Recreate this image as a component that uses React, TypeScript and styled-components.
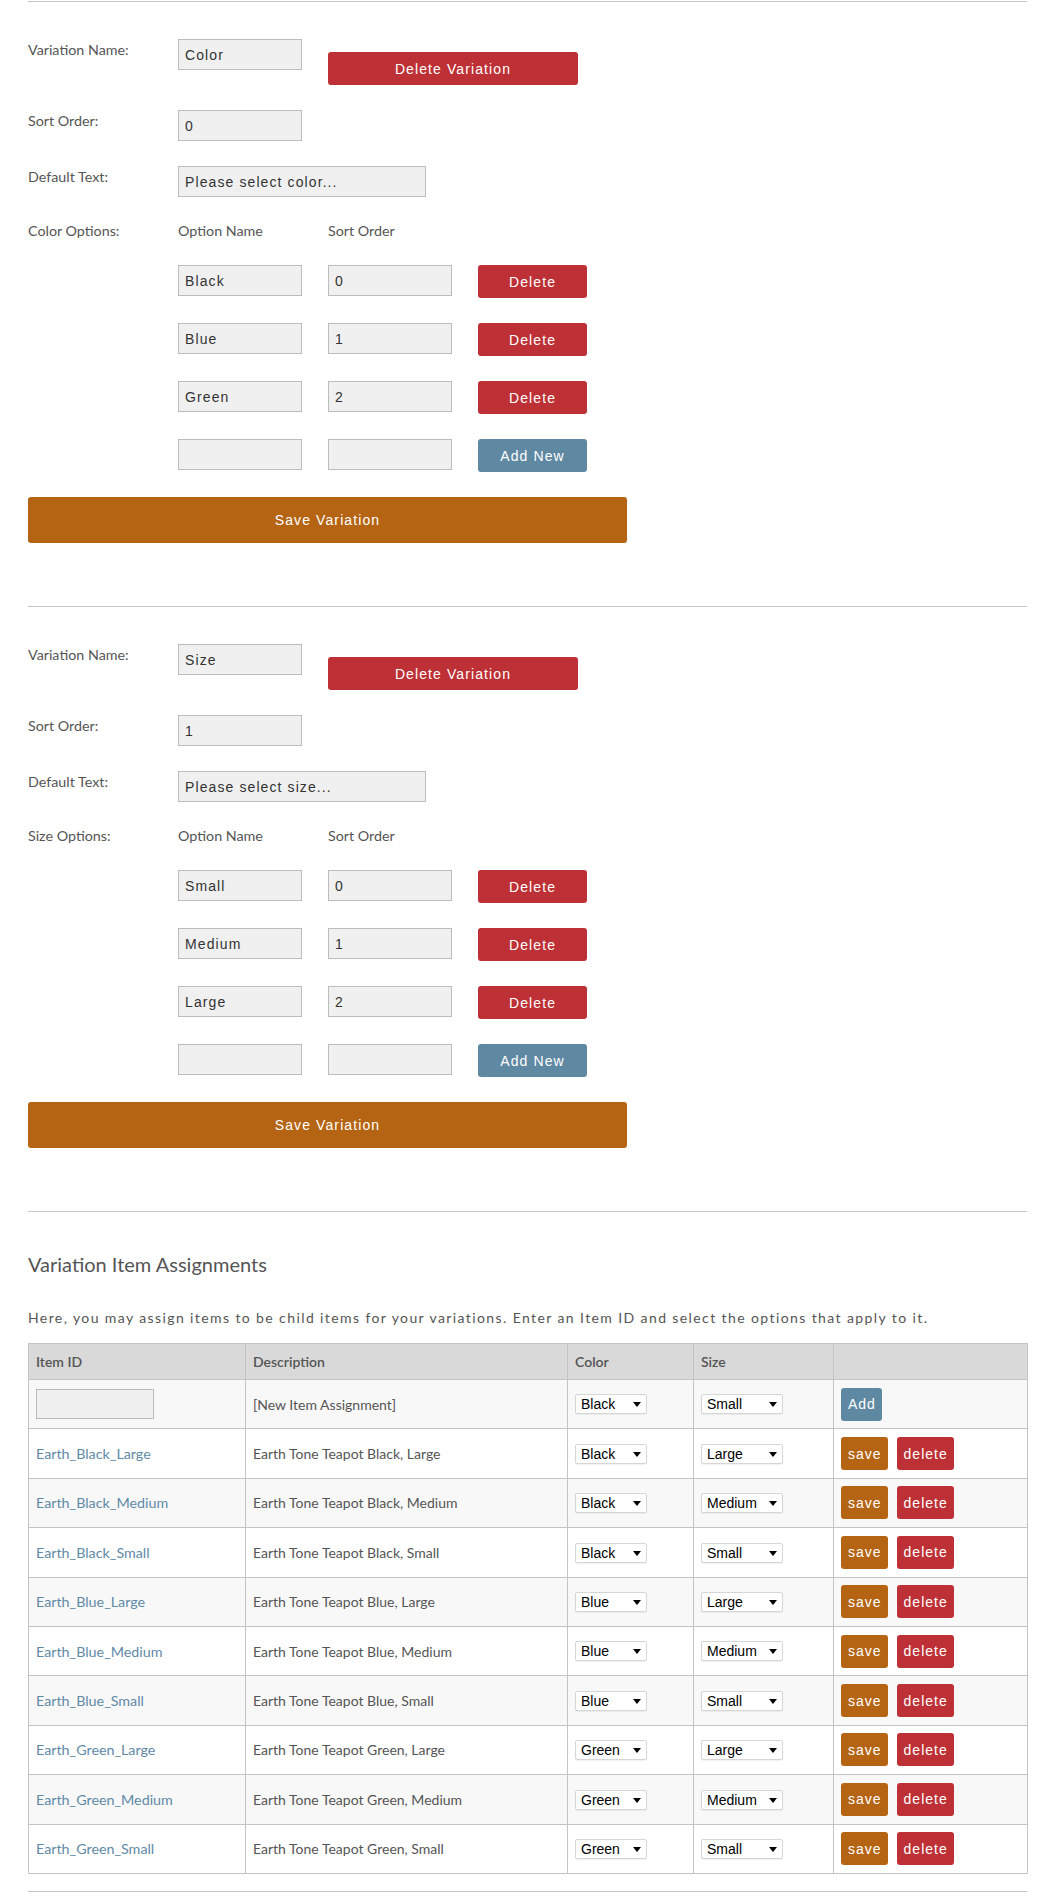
import React from 'react';
import styled, { createGlobalStyle } from 'styled-components';

const GlobalStyle = createGlobalStyle`
  body {
    margin: 0;
    background: #fff;
    color: #555;
    font-family: Lato, "Open Sans", sans-serif;
  }
`;

const colors = {
  red: '#bd3035',
  orange: '#b56413',
  blue: '#5f88a2',
};

type Tone = keyof typeof colors;

const Page = styled.div`
  padding: 1px 18px 0 28px;
`;

const Section = styled.section`
  border-top: 1px solid #c6c6c6;
  padding: 37px 0 63px;
`;

const Form = styled.div`
  display: flex;
  flex-direction: column;
  gap: 25px;
`;

const FormRow = styled.div`
  display: grid;
  grid-template-columns: 124px 124px 124px auto;
  column-gap: 26px;
  align-items: start;
`;

const Label = styled.div`
  font-size: 14.3px;
  line-height: 18px;
  padding-top: 2px;
  color: #555;
`;

const ColumnHead = styled.div`
  font-size: 14.3px;
  line-height: 18px;
  color: #555;
`;

const TextInput = styled.input<{ $wide?: boolean }>`
  box-sizing: border-box;
  width: ${(p) => (p.$wide ? '248px' : '124px')};
  height: 31px;
  border: 1px solid #bcbcbc;
  background: #f0f0f0;
  padding: 0 6px;
  font: 14px 'Liberation Sans', Arial, sans-serif;
  letter-spacing: 1.1px;
  color: #333;
  outline: none;
  ${(p) => (p.$wide ? 'grid-column: 2 / span 2;' : '')}
`;

const Button = styled.button<{ $tone: Tone }>`
  border: 0;
  border-radius: 3px;
  background: ${(p) => colors[p.$tone]};
  color: #fff;
  font: 14px 'Liberation Sans', Arial, sans-serif;
  letter-spacing: 1.1px;
  padding: 0;
  cursor: pointer;
`;

const DeleteVariationButton = styled(Button)`
  grid-column: 3 / span 2;
  width: 250px;
  height: 33px;
  margin-top: 13px;
`;

const OptionButton = styled(Button)`
  width: 109px;
  height: 33px;
`;

const SaveButton = styled(Button)`
  width: 599px;
  height: 46px;
`;

const SmallButton = styled(Button)`
  height: 33px;
  padding: 0 6px 0 7px;
  letter-spacing: 1px;
`;

const Heading = styled.h2`
  margin: 3px 0 0;
  font-size: 20px;
  line-height: 24px;
  font-weight: 400;
  color: #555;
`;

const Intro = styled.p`
  margin: 33px 0 16px;
  font-size: 14px;
  line-height: 18px;
  letter-spacing: 1.4px;
  color: #555;
`;

const Table = styled.table`
  width: 999px;
  border-collapse: collapse;
  table-layout: fixed;
  border: 1px solid #c4c4c4;
  font-size: 14px;
  color: #555;
`;

const Th = styled.th`
  height: 35px;
  padding: 0 7px;
  background: #d9d9d9;
  border: 1px solid #c4c4c4;
  text-align: left;
  font-weight: 600;
`;

const Tr = styled.tr`
  &:nth-child(odd) {
    background: #f8f8f8;
  }
  &:nth-child(even) {
    background: #fff;
  }
`;

const Td = styled.td`
  height: 48.4px;
  padding: 0 7px;
  border: 1px solid #c4c4c4;
  vertical-align: middle;
`;

const ItemLink = styled.a`
  color: #5f8aa6;
  text-decoration: none;
  font-size: 14.3px;
`;

const IdInput = styled(TextInput)`
  width: 118px;
  height: 30px;
  display: block;
`;

const SelectWrap = styled.span<{ $width: number }>`
  position: relative;
  display: inline-block;
  vertical-align: middle;
  width: ${(p) => p.$width}px;

  &::after {
    content: '';
    position: absolute;
    right: 6px;
    top: 8px;
    border-left: 4px solid transparent;
    border-right: 4px solid transparent;
    border-top: 5px solid #000;
    pointer-events: none;
  }
`;

const Select = styled.select`
  appearance: none;
  display: block;
  box-sizing: border-box;
  width: 100%;
  height: 20px;
  border: 1px solid #d6d6d6;
  border-radius: 2px;
  background: #fff;
  box-shadow: 0 1px 1px rgba(0, 0, 0, 0.06);
  padding: 0 0 0 5px;
  font: 14px 'Liberation Sans', Arial, sans-serif;
  color: #000;
  outline: none;
`;

const Actions = styled.div`
  display: flex;
  gap: 9px;
`;

const TrailingRule = styled.div`
  border-top: 1px solid #c6c6c6;
  height: 40px;
`;

const variations = [
  {
    name: 'Color',
    sort: '0',
    defaultText: 'Please select color...',
    label: 'Color Options:',
    options: [
      ['Black', '0'],
      ['Blue', '1'],
      ['Green', '2'],
    ],
  },
  {
    name: 'Size',
    sort: '1',
    defaultText: 'Please select size...',
    label: 'Size Options:',
    options: [
      ['Small', '0'],
      ['Medium', '1'],
      ['Large', '2'],
    ],
  },
];

const colorChoices = ['Black', 'Blue', 'Green'];
const sizeChoices = ['Small', 'Medium', 'Large'];

const items = [
  ['Earth_Black_Large', 'Earth Tone Teapot Black, Large', 'Black', 'Large'],
  ['Earth_Black_Medium', 'Earth Tone Teapot Black, Medium', 'Black', 'Medium'],
  ['Earth_Black_Small', 'Earth Tone Teapot Black, Small', 'Black', 'Small'],
  ['Earth_Blue_Large', 'Earth Tone Teapot Blue, Large', 'Blue', 'Large'],
  ['Earth_Blue_Medium', 'Earth Tone Teapot Blue, Medium', 'Blue', 'Medium'],
  ['Earth_Blue_Small', 'Earth Tone Teapot Blue, Small', 'Blue', 'Small'],
  ['Earth_Green_Large', 'Earth Tone Teapot Green, Large', 'Green', 'Large'],
  ['Earth_Green_Medium', 'Earth Tone Teapot Green, Medium', 'Green', 'Medium'],
  ['Earth_Green_Small', 'Earth Tone Teapot Green, Small', 'Green', 'Small'],
];

function Dropdown({ choices, value, width }: { choices: string[]; value: string; width: number }) {
  return (
    <SelectWrap $width={width}>
      <Select defaultValue={value}>
        {choices.map((c) => (
          <option key={c}>{c}</option>
        ))}
      </Select>
    </SelectWrap>
  );
}

function VariationEditor({ variation }: { variation: (typeof variations)[number] }) {
  return (
    <Section>
      <Form>
        <FormRow>
          <Label>Variation Name:</Label>
          <TextInput defaultValue={variation.name} />
          <DeleteVariationButton $tone="red">Delete Variation</DeleteVariationButton>
        </FormRow>
        <FormRow>
          <Label>Sort Order:</Label>
          <TextInput defaultValue={variation.sort} />
        </FormRow>
        <FormRow>
          <Label>Default Text:</Label>
          <TextInput $wide defaultValue={variation.defaultText} />
        </FormRow>
        <FormRow>
          <ColumnHead>{variation.label}</ColumnHead>
          <ColumnHead>Option Name</ColumnHead>
          <ColumnHead>Sort Order</ColumnHead>
        </FormRow>
        {variation.options.map(([name, sort]) => (
          <FormRow key={name}>
            <span />
            <TextInput defaultValue={name} />
            <TextInput defaultValue={sort} />
            <OptionButton $tone="red">Delete</OptionButton>
          </FormRow>
        ))}
        <FormRow>
          <span />
          <TextInput />
          <TextInput />
          <OptionButton $tone="blue">Add New</OptionButton>
        </FormRow>
        <SaveButton $tone="orange">Save Variation</SaveButton>
      </Form>
    </Section>
  );
}

export default function App() {
  return (
    <Page>
      <GlobalStyle />
      {variations.map((v) => (
        <VariationEditor key={v.name} variation={v} />
      ))}
      <Section style={{ paddingBottom: 17 }}>
        <Heading>Variation Item Assignments</Heading>
        <Intro>
          Here, you may assign items to be child items for your variations. Enter an Item ID and select the
          options that apply to it.
        </Intro>
        <Table>
          <colgroup>
            <col style={{ width: 217 }} />
            <col style={{ width: 322 }} />
            <col style={{ width: 126 }} />
            <col style={{ width: 140 }} />
            <col style={{ width: 194 }} />
          </colgroup>
          <thead>
            <tr>
              <Th>Item ID</Th>
              <Th>Description</Th>
              <Th>Color</Th>
              <Th>Size</Th>
              <Th />
            </tr>
          </thead>
          <tbody>
            <Tr>
              <Td>
                <IdInput />
              </Td>
              <Td>[New Item Assignment]</Td>
              <Td>
                <Dropdown choices={colorChoices} value="Black" width={72} />
              </Td>
              <Td>
                <Dropdown choices={sizeChoices} value="Small" width={82} />
              </Td>
              <Td>
                <SmallButton $tone="blue">Add</SmallButton>
              </Td>
            </Tr>
            {items.map(([id, desc, color, size]) => (
              <Tr key={id}>
                <Td>
                  <ItemLink href="#">{id}</ItemLink>
                </Td>
                <Td>{desc}</Td>
                <Td>
                  <Dropdown choices={colorChoices} value={color} width={72} />
                </Td>
                <Td>
                  <Dropdown choices={sizeChoices} value={size} width={82} />
                </Td>
                <Td>
                  <Actions>
                    <SmallButton $tone="orange">save</SmallButton>
                    <SmallButton $tone="red">delete</SmallButton>
                  </Actions>
                </Td>
              </Tr>
            ))}
          </tbody>
        </Table>
      </Section>
      <TrailingRule />
    </Page>
  );
}
